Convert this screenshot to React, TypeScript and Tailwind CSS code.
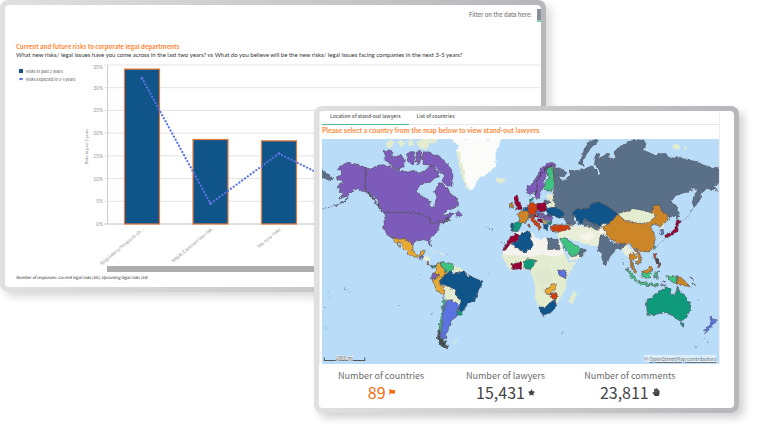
import { useState } from 'react'
import { FaFlag, FaHandPaper, FaStar } from 'react-icons/fa'

const risks = [
  { label: 'Regulatory/frequent ch…', past: 34.1, future: 32.1 },
  { label: 'M&A/Contract law risk', past: 18.6, future: 4.5 },
  { label: 'No new risks', past: 18.3, future: 15.5 },
  { label: 'Criminal/Fraud risk', past: 14, future: 8 },
  { label: 'Data protection', past: 12, future: 10 },
]

const ticks = [35, 30, 25, 20, 15, 10, 5, 0]

const tabs = ['Location of stand-out lawyers', 'List of countries']

const stats = [
  { label: 'Number of countries', value: '89', icon: FaFlag, color: 'text-[#f96a0c]', iconSize: 'size-[6px]' },
  { label: 'Number of lawyers', value: '15,431', icon: FaStar, color: 'text-[#444444]', iconSize: 'size-[7px]' },
  { label: 'Number of comments', value: '23,811', icon: FaHandPaper, color: 'text-[#444444]', iconSize: 'size-[8px]' },
]

const PURPLE = '#7d5bba'
const SLATE = '#5a7088'
const NAVY = '#10558a'
const ORANGE = '#cc8527'
const AMBER = '#e5a934'
const GREEN = '#3fc380'
const TEAL = '#109a7c'
const RED = '#cf3f0c'
const CRIMSON = '#960032'
const BLUE = '#5b73e0'

// Land without any lawyers, drawn flat with no border
const land = [
  { fill: '#fbfbfa', d: 'M390 0L400 14L411 18L404 33L414 63L422 93L424 123L434 145L449 155L456 145L464 123L484 111L509 93L521 83L519 63L522 33L534 13L536 0Z' },
  { fill: '#e4ecd0', d: 'M403 36L412 38L418 70L426 96L428 124L438 146L432 146L422 124L414 95L408 70Z' },
  { fill: '#e4ecd0', d: 'M190 12L202 2L216 8L210 24L196 28ZM222 8L240 4L250 14L238 24ZM256 6L272 2L276 18L262 22ZM284 6L312 0L326 14L306 32L288 24ZM300 0L350 0L340 12L322 12Z' },
  { fill: '#e4ecd0', d: 'M519 120L530 118L548 118L546 128L532 133L522 130Z' },
  { fill: '#e4ecd0', d: 'M1048 20L1060 14L1072 20L1070 30L1050 30ZM1082 22L1092 24L1090 32L1082 28Z' },
  { fill: '#e4ecd0', d: 'M579 280L604 276L629 280L634 293L654 300L669 296L709 300L719 328L729 348L739 370L762 366L744 398L732 418L729 448L709 483L689 513L659 526L649 503L636 473L639 443L629 408L624 393L599 390L566 393L549 373L539 353L544 333L564 293Z' },
  { fill: '#f5f3ee', d: 'M579 280L604 276L629 280L634 293L654 300L669 296L709 300L719 328L724 346L700 352L660 346L620 352L580 348L541 346L544 333L564 293Z' },
  { fill: '#dde8cf', d: 'M636 392L672 384L690 398L686 430L662 440L642 430Z' },
  { fill: '#e4ecd0', d: 'M742 470L757 451L760 468L749 492L740 490Z' },
  { fill: '#e9eed8', d: 'M706 276L742 266L756 256L768 262L790 258L846 252L872 250L858 262L856 296L840 290L826 322L800 318L778 312L756 306L728 294L712 298L704 290Z' },
  { fill: '#f5f3ea', d: 'M770 286L800 276L816 292L798 306L778 300ZM812 262L836 266L846 284L826 280Z' },
  { fill: '#e9eed8', d: 'M738 354L762 350L772 344L772 356L740 366Z' },
  { fill: '#e4ecd0', d: 'M672 165L690 162L696 186L694 206L676 202L674 184Z' },
  { fill: '#e4ecd0', d: 'M884 223L914 216L929 208L959 213L986 221L1000 230L989 242L966 256L910 249Z' },
  { fill: '#e9eed8', d: 'M896 316L912 312L922 330L942 336L950 360L940 366L930 352L920 360L908 348L900 338Z' },
  { fill: '#e4ecd0', d: 'M1010 252L1028 248L1020 268L1010 270Z' },
  { fill: '#e9eed8', d: 'M304 350L322 354L322 368L314 370L304 358Z' },
  { fill: '#e4ecd0', d: 'M395 378L410 384L426 393L424 402L398 402L390 393Z' },
  { fill: '#e4ecd0', d: 'M365 440L382 440L396 455L404 476L416 484L412 500L400 492L388 482L372 486L367 468Z' },
  { fill: '#e4ecd0', d: 'M324 330L340 334L350 342L338 338ZM354 341L366 343L364 348L354 346ZM392 606L404 602L406 606L396 610Z' },
]

const countries = [
  // Alaska, Canada and the arctic islands
  { fill: PURPLE, d: 'M130 84L112 79L98 77L80 69L66 75L52 85L46 92L56 98L58 106L43 114L46 121L62 124L60 131L50 135L46 143L54 149L52 157L64 162L58 170L50 177L74 172L86 162L96 153L108 148L118 155L130 158Z' },
  { fill: PURPLE, d: 'M130 84L146 90L160 82L178 76L196 80L210 88L230 94L258 99L276 94L290 102L304 96L312 92L320 83L328 72L338 84L342 96L352 100L348 112L336 118L324 130L306 131L288 144L282 158L296 170L312 178L323 184L325 203L334 205L339 190L344 172L337 158L345 144L348 132L358 132L369 146L376 146L384 163L400 176L411 196L398 206L380 212L366 222L362 232L376 226L392 222L380 240L360 246L340 250L325 256L320 236L300 226L284 220L184 220L176 208L168 186L154 172L142 160L130 158Z' },
  { fill: PURPLE, d: 'M184 36L206 33L212 42L206 50L224 54L236 46L246 62L244 82L226 92L208 82L200 70L186 62L190 50Z' },
  { fill: PURPLE, d: 'M254 46L264 38L278 40L277 66L268 78L256 66Z' },
  { fill: PURPLE, d: 'M283 38L295 34L297 58L290 76L282 72Z' },
  { fill: PURPLE, d: 'M302 42L316 38L330 44L350 50L366 68L382 82L392 108L388 143L372 138L358 126L366 112L354 98L340 84L324 78L306 76L298 58Z' },
  { fill: PURPLE, d: 'M400 222L412 216L419 228L416 234L402 230Z' },
  { fill: PURPLE, d: 'M184 220L284 220L300 226L320 236L325 256L340 250L360 246L379 233L369 243L356 255L349 263L346 278L334 288L322 298L326 313L329 321L322 319L316 305L304 301L289 304L276 308L272 318L259 308L249 298L226 300L207 293L196 288L186 271L184 253L190 228Z' },
  // Latin America
  { fill: AMBER, d: 'M209 294L226 300L249 298L259 308L272 318L272 333L282 348L294 345L298 335L309 333L304 345L292 355L276 353L259 343L247 331L239 318L230 308L226 306L234 325L222 315L212 301Z' },
  { fill: BLUE, d: 'M290 352L301 348L302 358L292 360Z' },
  { fill: RED, d: 'M312 368L319 370L322 377L315 376Z' },
  { fill: TEAL, d: 'M322 376L332 380L342 376L340 382L330 384Z' },
  { fill: AMBER, d: 'M344 373L355 369L358 384L371 389L371 403L368 411L360 416L344 405L334 401L342 391Z' },
  { fill: GREEN, d: 'M354 370L362 366L369 372L384 371L395 378L392 393L382 396L376 403L369 396L367 386L356 380Z' },
  { fill: AMBER, d: 'M329 420L337 421L349 408L358 414L352 424L354 438L364 442L367 455L365 469L344 453L334 433Z' },
  { fill: PURPLE, d: 'M329 406L339 401L349 408L337 421L328 416Z' },
  { fill: NAVY, d: 'M367 401L376 403L382 396L392 401L419 398L426 393L432 408L456 416L479 426L478 438L467 453L465 470L456 483L439 491L432 503L420 516L406 509L414 498L416 484L404 474L396 453L382 442L369 438L354 435L352 424L359 416L366 413Z' },
  { fill: BLUE, d: 'M372 483L389 481L399 488L412 498L405 512L406 526L399 536L384 543L386 556L376 563L378 573L369 586L371 596L362 600L356 588L359 558L362 528L366 503Z' },
  { fill: TEAL, d: 'M404 510L419 518L416 528L404 526Z' },
  { fill: GREEN, d: 'M364 470L369 483L365 503L361 528L357 558L354 588L362 603L369 618L378 621L364 626L352 613L346 593L350 573L354 538L360 503Z' },
  { fill: '#3f4f4c', d: 'M350 568L354 580L353 592L364 604L372 604L368 618L378 621L364 626L352 613L346 593Z' },
  // Nordics
  { fill: PURPLE, d: 'M654 90L669 76L689 70L699 76L697 84L684 84L675 90L672 110L664 124L662 146L655 160L650 176L642 181L637 168L633 156L622 168L612 160L614 142L632 132L642 113Z' },
  { fill: GREEN, d: 'M674 88L686 82L692 90L694 118L697 138L688 154L672 158L664 146L667 132L680 116L675 100Z' },
  // Russia
  { fill: SLATE, d: 'M692 84L714 88L732 101L724 113L706 111L714 123L729 123L744 108L739 93L754 98L769 91L789 88L809 81L822 93L826 111L834 103L816 73L819 48L829 43L834 63L839 53L856 43L862 63L879 53L877 38L894 23L924 5L964 3L969 18L959 33L984 43L994 48L1024 43L1044 58L1064 53L1094 63L1124 68L1154 83L1196 88L1196 128L1174 143L1184 153L1154 148L1139 158L1129 183L1114 205L1109 193L1112 173L1124 153L1114 145L1094 158L1059 168L1044 188L1059 198L1069 223L1064 243L1056 228L1040 240L1037 228L1019 218L1009 198L994 198L986 221L959 213L929 208L914 216L884 223L864 208L829 188L804 193L799 208L774 208L754 213L749 228L759 248L752 258L734 251L722 238L726 218L709 208L697 203L694 183L692 163L697 138L694 118Z' },
  { fill: SLATE, d: 'M822 1L800 8L784 33L776 60L768 72L784 80L780 66L792 44L808 22L828 8Z' },
  { fill: SLATE, d: 'M-8 88L4 94L16 104L32 116L24 126L10 118L-8 116Z' },
  { fill: SLATE, d: 'M664 184L680 182L684 192L668 194Z' },
  // Western and central Europe
  { fill: CRIMSON, d: 'M576 173L584 168L588 183L597 201L599 210L579 213L583 203L577 192Z' },
  { fill: ORANGE, d: 'M561 197L570 190L574 204L562 208Z' },
  { fill: TEAL, d: 'M621 178L632 175L630 188L622 190Z' },
  { fill: CRIMSON, d: 'M644 195L670 191L674 216L654 218L643 212Z' },
  { fill: ORANGE, d: 'M582 227L602 211L620 219L619 241L606 252L589 248L592 235Z' },
  { fill: NAVY, d: 'M606 206L617 200L616 216L606 212Z' },
  { fill: RED, d: 'M618 198L628 192L642 197L644 213L639 225L621 228L616 213Z' },
  { fill: NAVY, d: 'M565 252L574 252L572 276L565 274Z' },
  { fill: TEAL, d: 'M572 250L600 251L594 262L586 277L572 276Z' },
  { fill: SLATE, d: 'M618 230L630 227L630 234L620 236Z' },
  { fill: RED, d: 'M622 234L636 230L636 240L648 252L656 262L650 272L640 258L626 244ZM616 256L621 254L620 264L616 264Z' },
  { fill: BLUE, d: 'M638 219L652 215L660 222L648 228Z' },
  { fill: CRIMSON, d: 'M632 228L648 226L646 234L634 234Z' },
  { fill: PURPLE, d: 'M648 230L662 224L664 234L652 238Z' },
  { fill: CRIMSON, d: 'M644 240L656 238L662 250L654 250Z' },
  { fill: PURPLE, d: 'M664 230L684 226L690 240L672 244L662 238Z' },
  { fill: AMBER, d: 'M659 240L668 242L670 252L662 252Z' },
  { fill: TEAL, d: 'M672 246L688 246L686 254L674 254Z' },
  { fill: NAVY, d: 'M662 256L678 256L674 272L666 268Z' },
  { fill: NAVY, d: 'M672 208L697 203L712 210L726 220L722 233L704 235L694 230L674 228Z' },
  { fill: RED, d: 'M684 260L709 257L739 258L742 271L719 275L699 279L684 273Z' },
  { fill: AMBER, d: 'M730 252L744 252L746 258L734 258Z' },
  // Asia
  { fill: SLATE, d: 'M784 240L800 246L816 254L834 266L820 272L804 262L786 260Z' },
  { fill: NAVY, d: 'M749 228L754 213L774 208L799 208L804 193L829 188L864 208L884 223L879 238L868 254L846 252L829 262L812 252L796 244L784 238L782 253L772 255L762 240Z' },
  { fill: ORANGE, d: 'M884 223L894 233L910 247L966 254L989 240L1000 230L986 220L994 198L1009 198L1019 218L1037 228L1029 248L1009 261L994 255L982 263L992 278L997 298L992 323L979 338L952 336L934 328L919 313L899 318L879 308L856 293L852 278L839 263L859 253L876 238Z' },
  { fill: SLATE, d: 'M832 293L842 285L856 296L866 310L886 316L906 310L908 318L892 330L880 324L874 338L862 351L854 368L848 380L840 363L834 338L824 333L828 322Z' },
  { fill: GREEN, d: 'M712 298L724 294L744 308L762 320L776 330L780 340L760 350L746 352L734 336L722 318Z' },
  { fill: SLATE, d: 'M769 340L776 326L790 330L784 346L772 353Z' },
  { fill: ORANGE, d: 'M919 344L934 340L942 352L934 360L930 362L930 380L942 398L936 402L924 380L922 360Z' },
  { fill: ORANGE, d: 'M938 332L950 340L956 362L946 376L940 372L948 360Z' },
  { fill: GREEN, d: 'M909 385L924 396L946 425L938 426L918 404Z' },
  { fill: GREEN, d: 'M946 426L975 432L1005 434L1006 440L970 438L948 432Z' },
  { fill: GREEN, d: 'M956 400L978 392L988 396L980 416L960 416Z' },
  { fill: ORANGE, d: 'M956 397L972 392L984 380L990 390L968 403Z' },
  { fill: GREEN, d: 'M992 402L1008 398L1000 406L1006 420L996 412L994 420Z' },
  { fill: GREEN, d: 'M1029 408L1044 412L1062 410L1062 434L1044 426Z' },
  { fill: ORANGE, d: 'M1062 410L1080 420L1094 432L1102 444L1080 436L1062 434Z' },
  { fill: RED, d: 'M992 342L998 342L999 358L994 356Z' },
  { fill: '#4b4444', d: 'M996 358L1006 362L1012 378L1002 374Z' },
  { fill: RED, d: 'M1004 376L1012 374L1013 384L1006 384Z' },
  { fill: GREEN, d: 'M993 322L998 320L996 332L993 332Z' },
  { fill: BLUE, d: 'M1012 272L1020 270L1023 284L1013 288Z' },
  { fill: CRIMSON, d: 'M1026 288L1044 280L1055 270L1058 258L1062 240L1076 248L1066 254L1065 276L1048 288L1028 296Z' },
  // Africa
  { fill: CRIMSON, d: 'M564 293L584 283L592 290L586 303L564 313L549 333L541 334L552 313Z' },
  { fill: NAVY, d: 'M592 288L598 280L624 277L626 298L633 318L609 342L566 314L586 303Z' },
  { fill: SLATE, d: 'M676 297L706 300L713 331L676 331Z' },
  { fill: CRIMSON, d: 'M568 374L596 369L598 388L570 391Z' },
  { fill: TEAL, d: 'M606 366L616 359L641 363L634 376L624 390L604 388Z' },
  { fill: BLUE, d: 'M708 392L731 394L730 418L710 408Z' },
  { fill: AMBER, d: 'M668 450L682 444L686 434L700 434L702 448L690 455L682 466L668 462Z' },
  { fill: RED, d: 'M682 464L697 458L705 468L698 482L684 474Z' },
  { fill: NAVY, d: 'M649 503L669 503L684 488L698 482L702 502L684 520L659 528Z' },
  // Oceania
  { fill: TEAL, d: 'M970 483L986 475L1004 461L1024 446L1044 448L1042 461L1056 468L1064 443L1072 458L1089 473L1101 491L1102 511L1089 538L1072 545L1056 535L1044 523L1019 518L999 525L976 528L972 508Z' },
  { fill: TEAL, d: 'M1072 551L1085 551L1080 565Z' },
  { fill: BLUE, d: 'M1164 529L1172 540L1184 541L1174 553L1149 580L1144 574L1164 553Z' },
]

// Island chains and shared borders that are only a line at this zoom level
const outlines = [
  'M78 176L66 186L54 194L40 200',
  'M138 158L152 176L164 190L172 208L180 218',
  'M142 164L160 192L170 200',
  'M638 168L644 150L642 132L652 112L668 88L690 78',
  'M362 250L376 246L372 238L386 240',
  'M1100 412L1112 420M1106 430L1118 438M1018 424L1028 428M1012 436L1030 438',
]

const dashes = [
  'M40 200L20 205L2 208',
  'M1110 208L1102 222L1090 234L1080 244',
  'M1024 300L1014 312L1000 322',
  'M900 360L902 376',
  'M66 449L74 451L84 458',
  'M490 266L500 266L514 274',
  'M534 308L552 312',
]

const islets = [
  [18, 458], [20, 474], [8, 504], [12, 566], [230, 498], [330, 523], [295, 407], [497, 402],
  [718, 580], [1118, 620], [1142, 598], [1156, 608], [1126, 482], [376, 346],
]

const yFor = (value: number) => 163 - (value / 35) * 159
const xFor = (index: number) => 62 + index * 68.5

function RiskChart() {
  return (
    <svg
      viewBox="0 0 460 214"
      className="h-[214px] w-[460px] shrink-0 font-['Lato','Noto_Sans',sans-serif]"
      role="img"
      aria-label="Risks in past 2 years"
    >
      {ticks.map((tick) => (
        <g key={tick}>
          <line x1="24" x2="460" y1={yFor(tick)} y2={yFor(tick)} stroke={tick === 0 ? '#c4c4c4' : '#e4e4e4'} />
          <text x="23" y={yFor(tick) + (tick === 35 ? 4 : 2)} textAnchor="end" fontSize="5" fill="#999999">
            {tick}%
          </text>
        </g>
      ))}
      <line x1="27.5" x2="27.5" y1="4" y2="163" stroke="#cccccc" />
      <text transform="translate(8 103) rotate(-90)" fontSize="4" fill="#8c8c8c">
        Risks in past 2 years
      </text>
      {risks.map((risk, i) => (
        <g key={risk.label}>
          <rect
            x={xFor(i) - 17.5}
            y={yFor(risk.past)}
            width="35"
            height={163 - yFor(risk.past)}
            fill="#10558a"
            stroke="#e8793c"
            strokeWidth="1.2"
          />
          <text
            transform={`translate(${xFor(i) + 2} 169) rotate(-40)`}
            textAnchor="end"
            fontSize="5"
            fill="#999999"
          >
            {risk.label}
          </text>
        </g>
      ))}
      <polyline
        points={risks.map((risk, i) => `${xFor(i)},${yFor(risk.future)}`).join(' ')}
        fill="none"
        stroke="#5b73e0"
        strokeWidth="2.2"
        strokeLinecap="round"
        strokeDasharray="0.1 3.4"
      />
      {risks.map((risk, i) => (
        <circle key={risk.label} cx={xFor(i)} cy={yFor(risk.future)} r="1.5" fill="#5b73e0" />
      ))}
      <rect x="27" y="205" width="433" height="6" fill="#adadad" />
    </svg>
  )
}

function WorldMap() {
  return (
    <div className="relative">
      <svg viewBox="0 0 1188 672" className="block w-full bg-[#b9dcf9]" role="img" aria-label="World map">
        <defs>
          <filter
            id="coast"
            x="0"
            y="0"
            width="100%"
            height="100%"
            filterUnits="userSpaceOnUse"
            colorInterpolationFilters="sRGB"
          >
            <feTurbulence type="fractalNoise" baseFrequency="0.1" numOctaves="2" seed="4" />
            <feDisplacementMap in="SourceGraphic" scale="11" xChannelSelector="R" yChannelSelector="G" />
          </filter>
        </defs>
        <g filter="url(#coast)">
          {land.map((shape) => (
            <path key={shape.d} d={shape.d} fill={shape.fill} />
          ))}
          {countries.map((shape) => (
            <path key={shape.d} d={shape.d} fill={shape.fill} stroke="#55525f" strokeWidth="2" strokeLinejoin="round" />
          ))}
          {outlines.map((d) => (
            <path key={d} d={d} fill="none" stroke="#47444f" strokeWidth="3" />
          ))}
          {dashes.map((d) => (
            <path key={d} d={d} fill="none" stroke="#5a6675" strokeWidth="2.5" strokeDasharray="5 4" />
          ))}
          {islets.map(([x, y]) => (
            <circle key={`${x}-${y}`} cx={x} cy={y} r="2" fill="#7d93a8" />
          ))}
        </g>
        <path d="M7 654V663H128V654" fill="none" stroke="#555555" strokeWidth="3" />
        <text x="67" y="661" textAnchor="middle" fontSize="14" fill="#444444" stroke="#ffffff" strokeWidth="3" paintOrder="stroke">
          2000 mi
        </text>
      </svg>
      <div className="absolute right-[3px] bottom-[2px] bg-white/50 text-[5px] leading-[7px] text-[#777777]">
        © <a href="#osm" className="underline">OpenStreetMap contributors</a>
      </div>
    </div>
  )
}

export default function App() {
  const [activeTab, setActiveTab] = useState(0)

  return (
    <main className="relative min-h-screen overflow-hidden bg-white font-['Noto_Sans_CJK_SC','Noto_Sans',sans-serif]">
      {/* Risks window */}
      <section className="mr-[222px] rounded-lg bg-linear-to-r from-[#e0e0e0] to-[#b5b7ba] p-[5px] shadow-[5px_5px_9px_rgba(0,0,0,0.15)]">
        <div className="h-[282px] overflow-hidden rounded-sm bg-white">
          <div className="flex h-[37px] items-start justify-end gap-[5px] pt-[4px]">
            <span className="text-[6px] leading-[12px] text-[#666666]">Filter on the data here:</span>
            <button aria-label="Open filter" className="h-[13px] w-[4px] border-b-2 border-[#7fd1c0] bg-[#8b8f9c]" />
          </div>
          <h1 className="pl-[11px] text-[6px] leading-[9px] font-bold text-[#ff8a3c]">
            Current and future risks to corporate legal departments
          </h1>
          <p className="pl-[11px] font-['Lato','Noto_Sans',sans-serif] text-[6px] leading-[8px] whitespace-nowrap text-[#333333]">
            What new risks/ legal issues have you come across in the last two years? vs What do you believe will be the
            new risks/ legal issues facing companies in the next 3-5 years?
          </p>
          <div className="flex pt-[2px]">
            <ul className="w-[75px] shrink-0 pt-[6px] pl-[14px] text-[4px] leading-[8px] text-[#555555]">
              <li className="flex items-center gap-[3px]">
                <span className="size-[4px] bg-[#10558a]" />
                Risks in past 2 years
              </li>
              <li className="flex items-center gap-[3px]">
                <svg viewBox="0 0 4 4" className="size-[4px]">
                  <path d="M0 2H4" stroke="#5b73e0" />
                  <circle cx="2" cy="2" r="1.3" fill="#5b73e0" />
                </svg>
                Risks expected in 3-5 years
              </li>
            </ul>
            <RiskChart />
          </div>
          <p className="pl-[11px] text-[4px] leading-[5px] text-[#222222] italic">
            Number of responses: Current legal risks (55); Upcoming legal risks (54)
          </p>
        </div>
      </section>

      {/* Lawyers window, stacked over the first one */}
      <section className="absolute top-[106px] right-[29px] left-[314px] rounded-lg bg-linear-to-r from-[#e0e0e0] to-[#b5b7ba] p-[5px] shadow-[5px_5px_9px_rgba(0,0,0,0.18)]">
        <div className="overflow-hidden rounded-sm bg-white pb-[6px]">
          <div className="mr-[14px] border-x border-[#eeeeee] pl-[2px]">
            <div role="tablist" className="flex border-b border-[#e6e6e6]">
              {tabs.map((tab, i) => (
                <button
                  key={tab}
                  role="tab"
                  aria-selected={activeTab === i}
                  onClick={() => setActiveTab(i)}
                  className={`-mb-px border-b px-[8px] pb-[3px] text-[5px] leading-[10px] font-medium text-[#555555] ${
                    activeTab === i ? 'border-[#52b58c]' : 'border-transparent'
                  }`}
                >
                  {tab}
                </button>
              ))}
            </div>
            <h2 className="pb-[3px] font-['Lato','Noto_Sans',sans-serif] text-[7px] leading-[11px] font-bold text-[#ff8a3c]">
              Please select a country from the map below to view stand-out lawyers
            </h2>
            <WorldMap />
          </div>
          <dl className="mr-[42px] grid grid-cols-3 pt-[5px] text-center">
            {stats.map((stat) => {
              const Icon = stat.icon
              return (
                <div key={stat.label}>
                  <dt className="text-[9px] leading-[14px] text-[#6b6b6b]">{stat.label}</dt>
                  <dd className={`flex items-center justify-center gap-[3px] text-[16px] leading-[19px] ${stat.color}`}>
                    {stat.value}
                    <Icon className={stat.iconSize} />
                  </dd>
                </div>
              )
            })}
          </dl>
        </div>
      </section>
    </main>
  )
}
